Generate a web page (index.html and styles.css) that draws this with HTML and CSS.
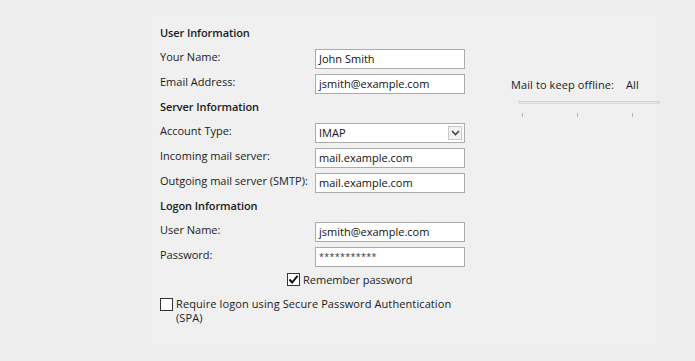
FILE: index.html
```html
<!DOCTYPE html>
<html>
<head>
<meta charset="utf-8">
<link rel="stylesheet" href="styles.css">
</head>
<body>
<div class="panel">
  <div class="form">
    <div class="heading">User Information</div>
    <div class="grid">
      <div class="label">Your Name:</div><div class="field">John Smith</div>
      <div class="label">Email Address:</div><div class="field">jsmith@example.com</div>
    </div>
    <div class="heading">Server Information</div>
    <div class="grid">
      <div class="label">Account Type:</div>
      <div class="field select">IMAP<span class="arrow"><svg width="9" height="6" viewBox="0 0 9 6"><path d="M1 1 L4.5 4.5 L8 1" fill="none" stroke="#444" stroke-width="1.6"/></svg></span></div>
      <div class="label">Incoming mail server:</div><div class="field">mail.example.com</div>
      <div class="label">Outgoing mail server (SMTP):</div><div class="field">mail.example.com</div>
    </div>
    <div class="heading">Logon Information</div>
    <div class="grid">
      <div class="label">User Name:</div><div class="field">jsmith@example.com</div>
      <div class="label">Password:</div><div class="field pw">***********</div>
    </div>
    <div class="remember">
      <span class="box"><svg width="11" height="11" viewBox="0 0 11 11"><path d="M1.5 5.5 L4.2 8.5 L9.5 1.8" fill="none" stroke="#111" stroke-width="2"/></svg></span>
      <span>Remember password</span>
    </div>
    <div class="spa">
      <span class="box"></span>
      <span class="spa-text">Require logon using Secure Password Authentication (SPA)</span>
    </div>
  </div>
  <div class="side">
    <div class="offline"><span>Mail to keep offline:</span><span class="all">All</span></div>
    <div class="track"></div>
    <div class="ticks"><span class="tick"></span><span class="tick"></span><span class="tick"></span></div>
  </div>
</div>
</body>
</html>
```
FILE: styles.css
```css
html, body {
  margin: 0;
  padding: 0;
}
body {
  background: #ededed;
  width: 695px;
  height: 361px;
  overflow: hidden;
  font-family: "Open Sans", "Noto Sans", sans-serif;
  font-size: 11px;
  color: #1b1b1b;
  padding-top: 16px;
  padding-left: 152px;
  box-sizing: border-box;
}
.panel {
  width: 504px;
  height: 329px;
  background: #f0f0f0;
  display: flex;
  box-sizing: border-box;
  padding: 9px 0 0 8px;
}
.form {
  width: 305px;
  display: flex;
  flex-direction: column;
}
.heading {
  font-weight: 600;
  letter-spacing: -0.1px;
  line-height: 16px;
  height: 16px;
  margin-bottom: 8px;
}
.grid + .heading {
  margin-top: 5px;
}
.grid {
  display: grid;
  grid-template-columns: 155px 150px;
  row-gap: 5px;
}
.label {
  line-height: 15px;
  white-space: nowrap;
}
.field {
  height: 20px;
  box-sizing: border-box;
  background: #fff;
  border: 1px solid #ababab;
  padding-left: 3px;
  line-height: 18px;
  color: #111;
  position: relative;
}
.pw {
  font-size: 9px;
  letter-spacing: 0.3px;
  color: #333;
}
.select .arrow {
  position: absolute;
  right: 2px;
  top: 2px;
  width: 14px;
  height: 14px;
  box-sizing: border-box;
  border: 1px solid #c8c8c8;
  background: #f2f2f2;
  display: flex;
  align-items: center;
  justify-content: center;
}
.box {
  width: 13px;
  height: 13px;
  box-sizing: border-box;
  border: 1px solid #333;
  background: #fff;
  display: inline-flex;
  align-items: center;
  justify-content: center;
  flex: none;
}
.remember {
  display: flex;
  align-items: center;
  gap: 3px;
  margin-top: 5px;
  padding-left: 127px;
  line-height: 15px;
}
.spa {
  display: flex;
  align-items: flex-start;
  gap: 3px;
  margin-top: 10px;
}
.spa .box {
  margin-top: 1px;
}
.spa-text {
  line-height: 14px;
  width: 292px;
  letter-spacing: 0.1px;
}
.side {
  margin-left: 46px;
  padding-top: 52px;
  width: 150px;
}
.offline {
  line-height: 16px;
  display: flex;
  gap: 12px;
  white-space: nowrap;
  letter-spacing: 0.1px;
}
.track {
  margin-top: 8px;
  margin-left: 7px;
  width: 142px;
  height: 3px;
  box-sizing: border-box;
  border-top: 1px solid #d2d2d2;
  border-bottom: 1px solid #dcdcdc;
  background: #e6e6e6;
}
.ticks {
  margin-top: 9px;
  margin-left: 11px;
  display: flex;
  gap: 54px;
}
.tick {
  width: 1px;
  height: 4px;
  background: #b5b5b5;
}
```
